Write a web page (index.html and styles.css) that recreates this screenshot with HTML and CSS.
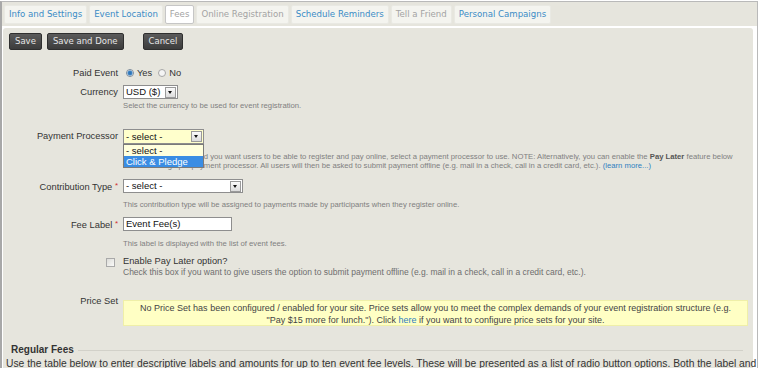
FILE: index.html
```html
<!DOCTYPE html>
<html lang="en">
<head>
    <meta charset="UTF-8">
    <title>Manage Event - Fees</title>
    <link rel="stylesheet" href="styles.css">
</head>
<body>
    <div class="frame">
        <ul class="tabs">
            <li><a href="#">Info and Settings</a></li>
            <li><a href="#">Event Location</a></li>
            <li class="current"><a href="#">Fees</a></li>
            <li class="disabled"><a href="#">Online Registration</a></li>
            <li><a href="#">Schedule Reminders</a></li>
            <li class="disabled"><a href="#">Tell a Friend</a></li>
            <li><a href="#">Personal Campaigns</a></li>
        </ul>
        <div class="panel">
            <div class="buttons">
                <span class="btn">Save</span>
                <span class="btn">Save and Done</span>
                <span class="btn cancel">Cancel</span>
            </div>

            <div class="row row-paid">
                <div class="label">Paid Event</div>
                <div class="field">
                    <span class="radio checked"></span><span class="opt">Yes</span>
                    <span class="radio"></span><span class="opt">No</span>
                </div>
            </div>

            <div class="row row-currency">
                <div class="label">Currency</div>
                <div class="field">
                    <div class="select w-currency"><span class="value">USD ($)</span><span class="arrow"></span></div>
                    <div class="help">Select the currency to be used for event registration.</div>
                </div>
            </div>

            <div class="row row-processor">
                <div class="label">Payment Processor</div>
                <div class="field">
                    <div class="select focus w-processor">
                        <span class="value">- select -</span><span class="arrow"></span>
                        <ul class="dropdown">
                            <li>- select -</li>
                            <li class="hover">Click &amp; Pledge</li>
                        </ul>
                    </div>
                    <div class="help help-wide">If this is a paid event and you want users to be able to register and pay online, select a payment processor to use. NOTE: Alternatively, you can enable the <b>Pay Later</b> feature below<br>without setting up a payment processor. All users will then be asked to submit payment offline (e.g. mail in a check, call in a credit card, etc.). <a href="#">(learn more...)</a></div>
                </div>
            </div>

            <div class="row row-contrib">
                <div class="label">Contribution Type <span class="req">*</span></div>
                <div class="field">
                    <div class="select w-contrib"><span class="value">- select -</span><span class="arrow"></span></div>
                    <div class="help">This contribution type will be assigned to payments made by participants when they register online.</div>
                </div>
            </div>

            <div class="row row-fee">
                <div class="label">Fee Label <span class="req">*</span></div>
                <div class="field">
                    <div class="text-input">Event Fee(s)</div>
                    <div class="help">This label is displayed with the list of event fees.</div>
                </div>
            </div>

            <div class="row row-later">
                <div class="label"><span class="checkbox"></span></div>
                <div class="field">
                    <div class="check-label">Enable Pay Later option?</div>
                    <div class="help help-big">Check this box if you want to give users the option to submit payment offline (e.g. mail in a check, call in a credit card, etc.).</div>
                </div>
            </div>

            <div class="row row-price">
                <div class="label">Price Set</div>
                <div class="field">
                    <div class="notice">No Price Set has been configured / enabled for your site. Price sets allow you to meet the complex demands of your event registration structure (e.g. "Pay $15 more for lunch."). Click <a href="#">here</a> if you want to configure price sets for your site.</div>
                </div>
            </div>

            <div class="legend">Regular Fees</div>
            <p class="intro">Use the table below to enter descriptive labels and amounts for up to ten event fee levels. These will be presented as a list of radio button options. Both the label and dollar amount will be displayed.</p>
        </div>
    </div>
</body>
</html>
```

FILE: styles.css
```css
*{
    padding: 0;
    margin: 0;
    box-sizing: border-box;
}
html,
body{
    height: 368px;
    overflow: hidden;
}
body{
    background: #fff;
    font-family: "Liberation Sans", Arial, sans-serif;
    color: #333;
}
a{
    color: #2f7fc0;
    text-decoration: none;
}
.frame{
    margin-top: 1px;
    width: 758px;
    height: 367px;
    overflow: hidden;
    border: 1px solid #b9b9b9;
    border-left: 2px solid #a8a8a8;
    border-bottom: 0;
    background: #fff;
}
/* tabs */
.tabs{
    list-style: none;
    display: flex;
    gap: 2px;
    height: 24px;
    padding: 3px 0 0 2px;
    background: #e6e5dd;
}
.tabs li{
    height: 19px;
    background: #f4f4ef;
    border: 1px solid #e9e9e3;
    border-radius: 2px;
}
.tabs a{
    display: block;
    padding: 0 4px;
    line-height: 17px;
    font-family: "DejaVu Sans", Verdana, sans-serif;
    font-size: 8.6px;
    color: #3b8cc6;
}
.tabs .current{
    background: #fff;
    border-color: #c6c6c6;
}
.tabs .current a,
.tabs .disabled a{
    color: #a3a3a3;
}
/* panel */
.panel{
    margin: 2px 4px 0 1px;
    height: 360px;
    background: #e6e5dd;
    border-radius: 3px 3px 0 0;
    padding-top: 5px;
}
.buttons{
    display: flex;
    padding-left: 6px;
    gap: 5px;
}
.btn{
    height: 17px;
    line-height: 15px;
    padding: 0 5px;
    border: 1px solid #2f2f2f;
    border-radius: 2px;
    background: linear-gradient(#5b5b5b, #3c3c3c);
    color: #e6e6e6;
    font-family: "DejaVu Sans", Verdana, sans-serif;
    font-size: 8.5px;
}
.btn.cancel{
    margin-left: 14px;
}
/* form rows */
.row{
    display: flex;
    align-items: flex-start;
}
.label{
    width: 115px;
    text-align: right;
    font-size: 9.3px;
    line-height: 14px;
    color: #333;
}
.req{
    color: #d03030;
    font-size: 8px;
    vertical-align: 2px;
}
.field{
    margin-left: 5px;
}
.row-paid{ margin-top: 16px; }
.row-currency{ margin-top: 5px; }
.row-processor{ margin-top: 19px; }
.row-contrib{ margin-top: 9px; }
.row-fee{ margin-top: 8px; }
.row-later{ margin-top: 7px; }
.row-price{ margin-top: 16px; }

.row-paid .field{
    display: flex;
    align-items: center;
    height: 14px;
    font-size: 9.3px;
}
.radio{
    width: 8px;
    height: 8px;
    margin: 0 3px 0 3px;
    border: 1px solid #a6a6a6;
    border-radius: 50%;
    background: #f4f4f4;
}
.radio.checked{
    background: radial-gradient(circle, #2a6aa8 0, #3e86c8 2px, #e8eef4 3px);
    border-color: #7c8c9c;
}
.opt{
    margin-right: 3px;
}
.select{
    position: relative;
    height: 14px;
    border: 1px solid #8e8e8e;
    background: #fff;
    display: flex;
    align-items: center;
    font-size: 9.5px;
    color: #111;
}
.select.focus{
    background: #ffffcc;
    height: 15px;
}
.select .value{
    flex: 1;
    padding-left: 2px;
    line-height: 12px;
}
.arrow{
    width: 11px;
    height: 11px;
    margin-right: 1px;
    border: 1px solid #9a9a9a;
    background: linear-gradient(#fafafa, #dcdcdc);
    position: relative;
}
.arrow::after{
    content: "";
    position: absolute;
    left: 2px;
    top: 3px;
    border-left: 2.5px solid transparent;
    border-right: 2.5px solid transparent;
    border-top: 3px solid #111;
}
.w-currency{ width: 55px; }
.w-processor{ width: 81px; }
.w-contrib{ width: 120px; }
.dropdown{
    position: absolute;
    top: 14px;
    left: -1px;
    width: 81px;
    list-style: none;
    border: 1px solid #7a7a7a;
    background: #ffffdd;
    z-index: 2;
}
.dropdown li{
    height: 11px;
    line-height: 11px;
    padding-left: 2px;
    font-size: 9.5px;
}
.dropdown .hover{
    background: #3a8de4;
    color: #fff;
}
.text-input{
    width: 109px;
    height: 14px;
    border: 1px solid #8e8e8e;
    background: #fff;
    padding-left: 2px;
    font-size: 9.5px;
    line-height: 12px;
    color: #111;
}
.help{
    font-size: 7.7px;
    line-height: 9px;
    color: #7f7f7f;
    margin-top: 2px;
}
.row-processor .help{ margin-top: 8px; }
.row-contrib .help{ margin-top: 7px; }
.row-fee .help{ margin-top: 8px; }
.help-wide{
    white-space: nowrap;
}
.help-wide b{
    color: #555;
}
.help-big{
    font-size: 8.5px;
    line-height: 11px;
    margin-top: 0;
    color: #6e6e6e;
}
.check-label{
    font-size: 9.3px;
    line-height: 12px;
}
.row-later .label{
    height: 12px;
    display: flex;
    justify-content: flex-end;
    align-items: flex-end;
    padding-right: 3px;
}
.checkbox{
    width: 9px;
    height: 9px;
    border: 1px solid #a9a9a9;
    background: linear-gradient(135deg, #dcdcd8, #fafaf8);
}
.notice{
    margin-top: 6px;
    width: 625px;
    height: 26px;
    padding: 1px 10px 0;
    background: #ffffc4;
    border: 1px solid #efefa8;
    text-align: center;
    font-size: 9px;
    line-height: 12px;
    color: #444;
}
.legend{
    margin-top: 18px;
    display: flex;
    align-items: center;
    padding-left: 8px;
    font-size: 10px;
    font-weight: bold;
    line-height: 12px;
    color: #333;
}
.legend::after{
    content: "";
    flex: 1;
    margin: 0 10px 0 4px;
    border-top: 1px solid #d2d1c9;
}
.intro{
    margin-top: 2px;
    padding-left: 3px;
    font-size: 10.3px;
    line-height: 12px;
    color: #333;
    white-space: nowrap;
}
```
